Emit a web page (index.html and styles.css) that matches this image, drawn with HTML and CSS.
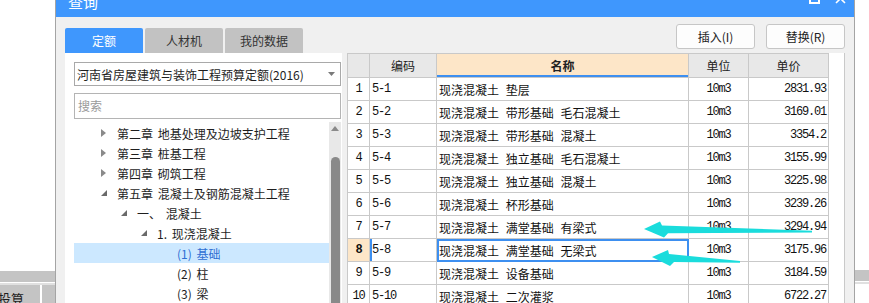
FILE: index.html
```html
<!DOCTYPE html>
<html lang="zh-CN">
<head>
    <meta charset="UTF-8">
    <meta name="viewport" content="width=device-width, initial-scale=1.0">
    <title>查询</title>
    <link rel="stylesheet" href="styles.css">
</head>
<body>
<div class="screen">
    <div class="backdrop backdrop-left">
        <div class="bd-bar"></div>
        <div class="bd-line"></div>
        <div class="bd-tabs">
            <div class="bd-tab">投算</div>
            <div class="bd-tab"></div>
        </div>
    </div>

    <div class="dialog">
        <div class="titlebar">
            <span class="title">查询</span>
            <span class="win-btns">
                <svg class="win-icon" width="11" height="11" viewBox="0 0 11 11"><rect x="1" y="1" width="9" height="9" fill="none" stroke="#fff" stroke-width="2"/></svg>
                <svg class="win-icon" width="11" height="11" viewBox="0 0 11 11"><path d="M1 1 L10 10 M10 1 L1 10" stroke="#fff" stroke-width="1.6"/></svg>
            </span>
        </div>

        <div class="dlg-body">
            <div class="toolbar">
                <div class="tabs">
                    <div class="tab active">定额</div>
                    <div class="tab">人材机</div>
                    <div class="tab">我的数据</div>
                </div>
                <div class="actions">
                    <button class="btn">插入(I)</button>
                    <button class="btn">替换(R)</button>
                </div>
            </div>

            <div class="main">
                <div class="side">
                    <div class="select">
                        <span class="select-text">河南省房屋建筑与装饰工程预算定额(2016)</span>
                        <svg width="7" height="4" viewBox="0 0 7 4"><path d="M0 0 H7 L3.5 4 Z" fill="#7a7a7a"/></svg>
                    </div>
                    <div class="search">搜索</div>
                    <div class="tree-wrap">
                        <div class="tree">
                            <div class="node lv1"><span class="twisty"><svg width="5" height="8" viewBox="0 0 5 8"><path d="M0 0 L5 4 L0 8 Z" fill="#8a8a8a"/></svg></span>第二章 地基处理及边坡支护工程</div>
                            <div class="node lv1"><span class="twisty"><svg width="5" height="8" viewBox="0 0 5 8"><path d="M0 0 L5 4 L0 8 Z" fill="#8a8a8a"/></svg></span>第三章 桩基工程</div>
                            <div class="node lv1"><span class="twisty"><svg width="5" height="8" viewBox="0 0 5 8"><path d="M0 0 L5 4 L0 8 Z" fill="#8a8a8a"/></svg></span>第四章 砌筑工程</div>
                            <div class="node lv1"><span class="twisty"><svg width="6" height="6" viewBox="0 0 6 6"><path d="M6 0 L6 6 L0 6 Z" fill="#6a6a6a"/></svg></span>第五章 混凝土及钢筋混凝土工程</div>
                            <div class="node lv2"><span class="twisty"><svg width="6" height="6" viewBox="0 0 6 6"><path d="M6 0 L6 6 L0 6 Z" fill="#6a6a6a"/></svg></span>一、 混凝土</div>
                            <div class="node lv3"><span class="twisty"><svg width="6" height="6" viewBox="0 0 6 6"><path d="M6 0 L6 6 L0 6 Z" fill="#6a6a6a"/></svg></span>1. 现浇混凝土</div>
                            <div class="node lv4 sel"><span class="twisty"></span>(1) 基础</div>
                            <div class="node lv4"><span class="twisty"></span>(2) 柱</div>
                            <div class="node lv4"><span class="twisty"></span>(3) 梁</div>
                        </div>
                        <div class="vscroll">
                            <svg class="vscroll-up" width="8" height="5" viewBox="0 0 8 5"><path d="M0 5 L4 0 L8 5 Z" fill="#8a8a8a"/></svg>
                            <div class="vscroll-thumb"></div>
                        </div>
                    </div>
                </div>

                <div class="grid">
                    <table class="items">
                        <colgroup>
                            <col class="c-no">
                            <col class="c-code">
                            <col class="c-name">
                            <col class="c-unit">
                            <col class="c-price">
                        </colgroup>
                        <thead>
                            <tr>
                                <th></th>
                                <th>编码</th>
                                <th class="h-active">名称</th>
                                <th>单位</th>
                                <th>单价</th>
                            </tr>
                        </thead>
                        <tbody>
                            <tr><td class="no">1</td><td class="code">5-1</td><td class="name">现浇混凝土 垫层</td><td class="unit">10m3</td><td class="price">2831.93</td></tr>
                            <tr><td class="no">2</td><td class="code">5-2</td><td class="name">现浇混凝土 带形基础 毛石混凝土</td><td class="unit">10m3</td><td class="price">3169.01</td></tr>
                            <tr><td class="no">3</td><td class="code">5-3</td><td class="name">现浇混凝土 带形基础 混凝土</td><td class="unit">10m3</td><td class="price">3354.2</td></tr>
                            <tr><td class="no">4</td><td class="code">5-4</td><td class="name">现浇混凝土 独立基础 毛石混凝土</td><td class="unit">10m3</td><td class="price">3155.99</td></tr>
                            <tr><td class="no">5</td><td class="code">5-5</td><td class="name">现浇混凝土 独立基础 混凝土</td><td class="unit">10m3</td><td class="price">3225.98</td></tr>
                            <tr><td class="no">6</td><td class="code">5-6</td><td class="name">现浇混凝土 杯形基础</td><td class="unit">10m3</td><td class="price">3239.26</td></tr>
                            <tr><td class="no">7</td><td class="code">5-7</td><td class="name">现浇混凝土 满堂基础 有梁式</td><td class="unit">10m3</td><td class="price">3294.94</td></tr>
                            <tr class="current"><td class="no">8</td><td class="code">5-8</td><td class="name">现浇混凝土 满堂基础 无梁式</td><td class="unit">10m3</td><td class="price">3175.96</td></tr>
                            <tr><td class="no">9</td><td class="code">5-9</td><td class="name">现浇混凝土 设备基础</td><td class="unit">10m3</td><td class="price">3184.59</td></tr>
                            <tr><td class="no">10</td><td class="code">5-10</td><td class="name">现浇混凝土 二次灌浆</td><td class="unit">10m3</td><td class="price">6722.27</td></tr>
                        </tbody>
                    </table>
                </div>
            </div>
        </div>
    </div>

    <div class="backdrop backdrop-right">
        <div class="bd-bar"></div>
        <div class="bd-line"></div>
    </div>

    <!-- annotation arrows drawn over the grid -->
    <svg class="annot" width="869" height="303" viewBox="0 0 869 303">
        <polygon points="644,229 660,221.5 662,225.5 812,230.8 812,232.6 668,233.2 664,237.5" fill="#1adcdc"/>
        <polygon points="652,257 668,250 669,254 740,261 740,262.8 674,262 670,266" fill="#1adcdc"/>
    </svg>
</div>
</body>
</html>
```

FILE: styles.css
```css
* {
    box-sizing: border-box;
}
body {
    margin: 0;
    background: #fff;
    font-family: "Noto Sans CJK SC", "Noto Sans", sans-serif;
    font-size: 12px;
    color: #1e1e1e;
}
.screen {
    position: relative;
    display: flex;
    width: 869px;
    height: 303px;
    overflow: hidden;
}

/* window behind the dialog */
.backdrop {
    background: #fff;
}
.backdrop-left {
    width: 55px;
    padding-top: 271px;
}
.backdrop-right {
    flex: 1;
    padding-top: 270px;
}
.bd-bar {
    height: 11px;
    background: #c4c4c4;
}
.bd-line {
    height: 2px;
    margin-top: 1px;
    background: #e0e0e0;
}
.bd-tabs {
    display: flex;
    gap: 2px;
    height: 20px;
}
.bd-tab {
    flex: 1;
    background: #c4c4c4;
    font-size: 13px;
    line-height: 14px;
    padding-top: 7px;
    overflow: hidden;
    white-space: nowrap;
}
.bd-tab:first-child {
    flex: 0 0 40px;
    text-indent: -2px;
}

/* dialog */
.dialog {
    width: 800px;
    border-left: 1px solid #a4a4a4;
    border-right: 1px solid #a4a4a4;
    background: #f0f0f0;
    display: flex;
    flex-direction: column;
}
.titlebar {
    height: 17px;
    flex: 0 0 17px;
    background: #3f97fd;
    color: #fff;
    display: flex;
    align-items: flex-start;
    padding: 0 8px 0 12px;
    overflow: hidden;
}
.title {
    font-size: 15px;
    line-height: 15px;
    margin-top: -6px;
}
.win-btns {
    margin-left: auto;
    display: flex;
    gap: 15px;
    margin-top: -7px;
}
.dlg-body {
    flex: 1;
    padding: 0 9px;
    display: flex;
    flex-direction: column;
    min-height: 0;
}
.toolbar {
    height: 36px;
    flex: 0 0 36px;
    display: flex;
    justify-content: space-between;
}
.tabs {
    align-self: flex-end;
    display: flex;
    gap: 2px;
}
.tab {
    width: 78px;
    height: 25px;
    line-height: 25px;
    text-align: center;
    background: #c2c2c2;
    color: #333;
    border-radius: 2px 2px 0 0;
}
.tab.active {
    background: #3f97fd;
    color: #fff;
}
.actions {
    display: flex;
    gap: 11px;
    padding-top: 7px;
}
.btn {
    width: 79px;
    height: 25px;
    padding: 0;
    border: 1px solid #c6c6c6;
    border-radius: 3px;
    background: #fdfdfd;
    font-family: inherit;
    font-size: 12px;
    color: #222;
}

.main {
    flex: 1;
    display: flex;
    min-height: 0;
}

/* left: quota library tree */
.side {
    width: 277px;
    flex: 0 0 277px;
    background: #fff;
    padding: 9px 1px 0 9px;
    display: flex;
    flex-direction: column;
}
.select {
    height: 26px;
    border: 1px solid #a9a9a9;
    display: flex;
    align-items: center;
    padding: 0 5px 0 2px;
}
.select-text {
    flex: 1;
}
.search {
    height: 26px;
    margin-top: 7px;
    border: 1px solid #b4b4b4;
    padding-left: 3px;
    line-height: 24px;
    color: #9a9a9a;
}
.tree-wrap {
    flex: 1;
    display: flex;
    margin-top: 1px;
}
.tree {
    flex: 1;
    padding-top: 3px;
}
.node {
    height: 20px;
    display: flex;
    align-items: center;
    white-space: pre;
    word-spacing: 2px;
}
.node.sel {
    background: #cce8ff;
    color: #2f6fd3;
}
.twisty {
    flex: 0 0 16px;
    display: flex;
    align-items: center;
}
.lv1 { padding-left: 27px; }
.lv2 { padding-left: 47px; }
.lv3 { padding-left: 67px; }
.lv4 { padding-left: 87px; }
.vscroll {
    width: 12px;
    margin-top: 2px;
    background: #e8e8e8;
    display: flex;
    flex-direction: column;
    align-items: center;
}
.vscroll-up {
    margin-top: 4px;
}
.vscroll-thumb {
    flex: 1;
    width: 9px;
    margin-top: 26px;
    border-radius: 5px 5px 0 0;
    background: #898989;
}

/* right: quota items */
.grid {
    flex: 1;
    margin-left: 5px;
    background: #fff;
    border-right: 1px solid #c9c9c9;
    overflow: hidden;
}
.items {
    border-collapse: collapse;
    table-layout: fixed;
    width: 482px;
}
.c-no { width: 22px; }
.c-code { width: 67px; }
.c-name { width: 252px; }
.c-unit { width: 60px; }
.c-price { width: 80px; }
.items th,
.items td {
    border: 1px solid #c9c9c9;
    padding: 0 2px;
    white-space: nowrap;
    overflow: hidden;
}
.items th {
    height: 24px;
    background: #e8e8e8;
    font-weight: normal;
    color: #222;
}
.items th.h-active {
    background: #fde6c8;
    font-weight: bold;
    box-shadow: inset 0 -2px 0 #3d8ff0;
}
.items td {
    height: 23px;
    color: #111;
}
.no,
.code,
.unit,
.price {
    font-family: "Liberation Mono", monospace;
    font-size: 12px;
    letter-spacing: -1.2px;
}
.no {
    text-align: center;
}
.name {
    white-space: pre;
    word-spacing: 4px;
}
.unit {
    text-align: center;
}
.price {
    text-align: right;
    padding-right: 3px;
}
.current .no {
    background: #fde6c8;
    font-weight: bold;
}
.current .code {
    box-shadow: inset 2px 0 0 #3d8ff0;
}
.current .name {
    outline: 2px solid #3d8ff0;
    outline-offset: -2px;
}

.annot {
    position: absolute;
    top: 0;
    left: 0;
    pointer-events: none;
}
```
